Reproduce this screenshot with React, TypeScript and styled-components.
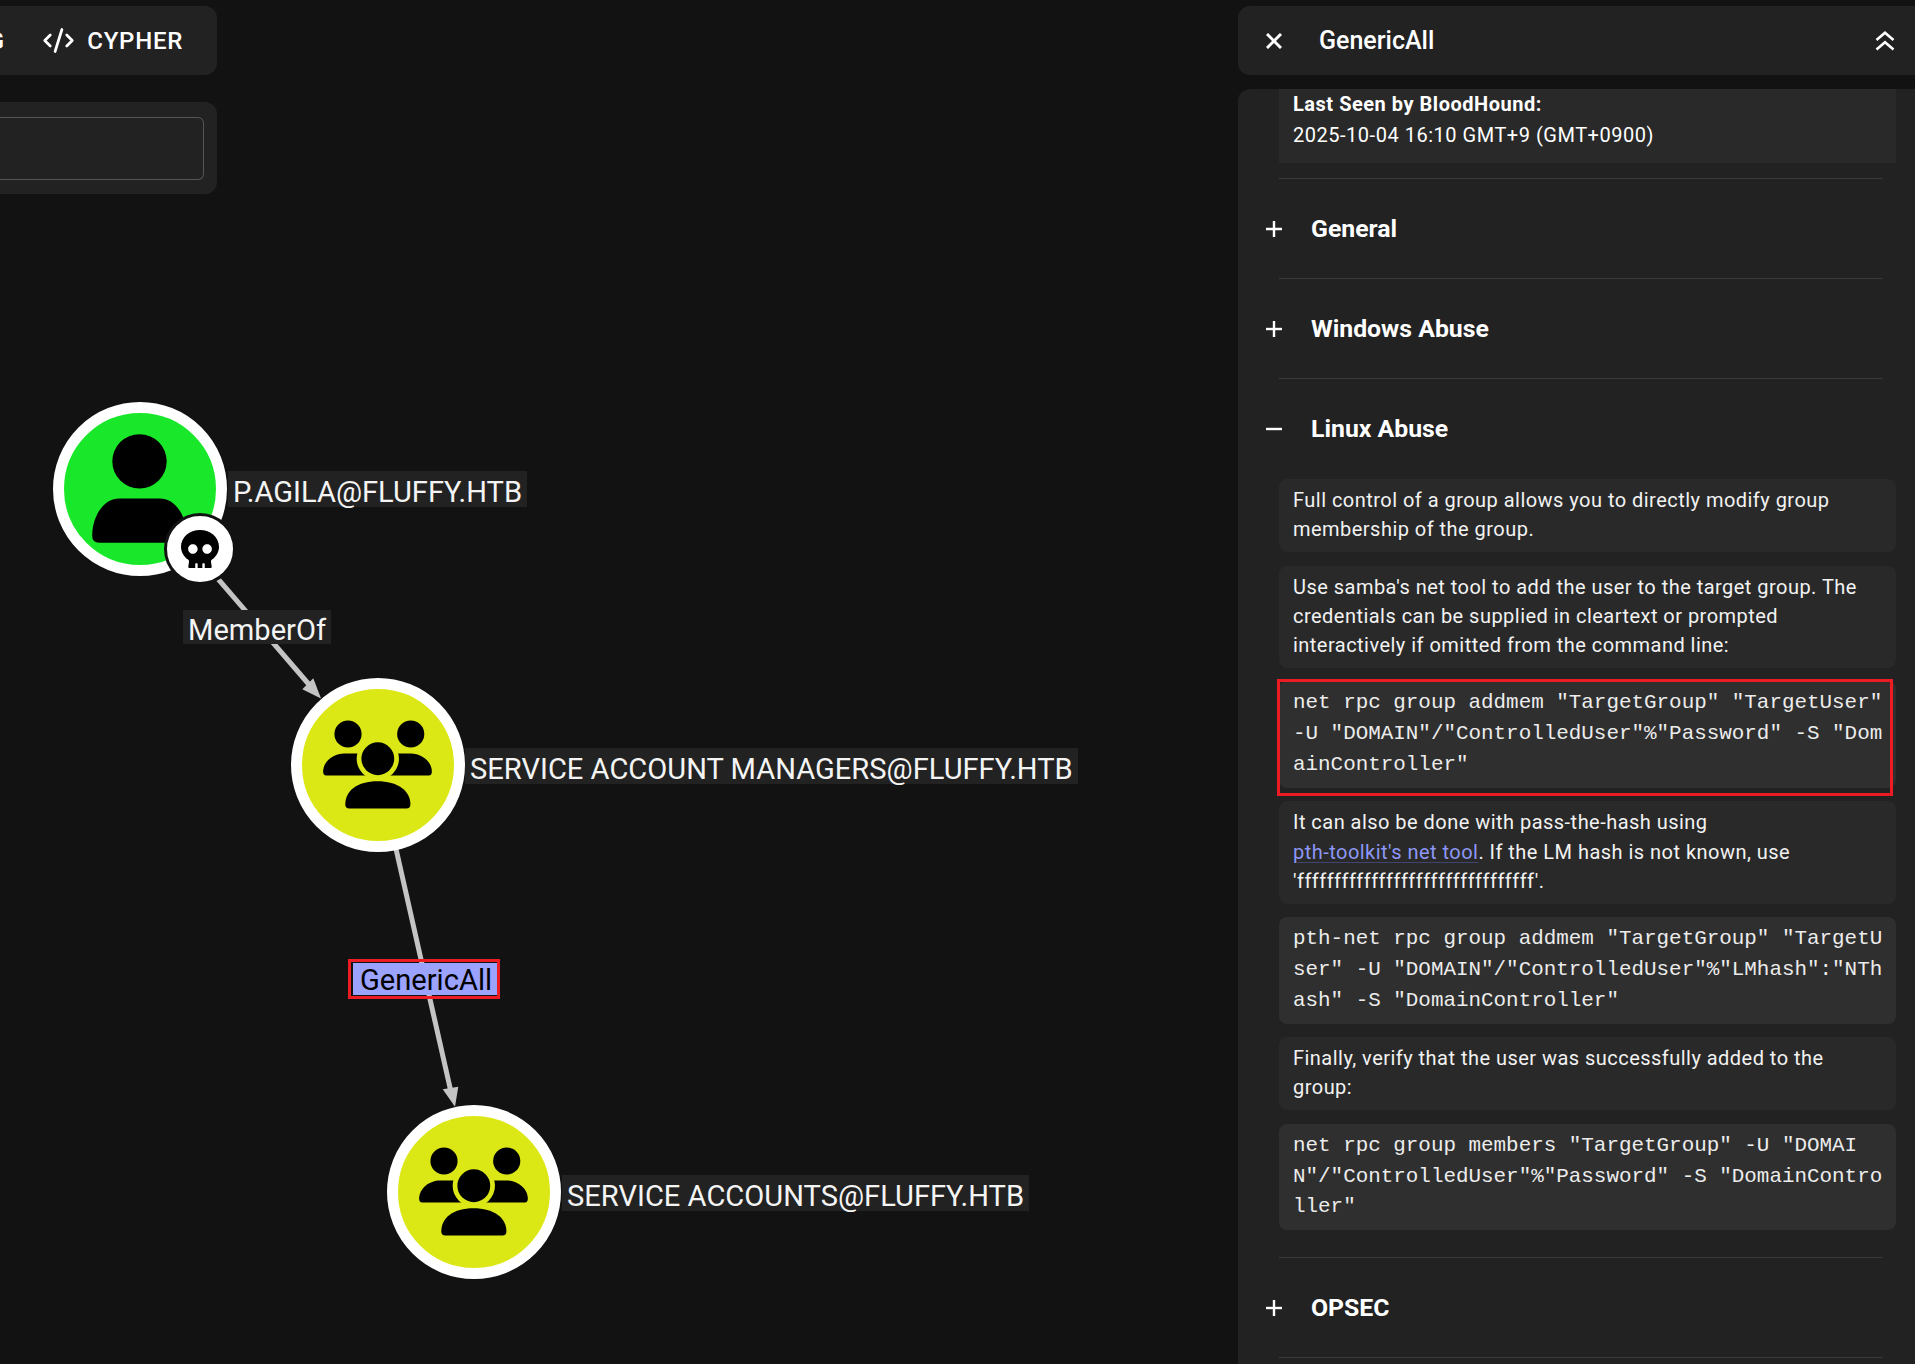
import React from "react";
import styled, { createGlobalStyle } from "styled-components";
import { CodeXml } from "lucide-react";
import { FaSkull } from "react-icons/fa";

const GlobalStyle = createGlobalStyle`
  html, body {
    margin: 0;
    padding: 0;
    background: #121212;
  }
  * {
    box-sizing: border-box;
  }
`;

const UserGlyph = () => (
  <NodeGlyph viewBox="-75 -75 150 150">
    <circle cx="0" cy="-27" r="27" fill="#000" />
    <path
      d="M-20 10H20C36 10 47 28 47 47Q47 54 40 54H-40Q-47 54 -47 47C-47 28 -36 10 -20 10Z"
      fill="#000"
    />
  </NodeGlyph>
);

const GroupGlyph = () => (
  <NodeGlyph viewBox="-75 -75 150 150">
    <circle cx="-29.3" cy="-30.3" r="13.5" fill="#000" />
    <circle cx="33" cy="-30.3" r="13.5" fill="#000" />
    <path d="M-51 11Q-54 11 -54 7C-54 -3 -44 -11 -33 -11H-5V11Z" fill="#000" />
    <path d="M54 11H5V-11H33C44 -11 54 -3 54 7Q54 11 51 11Z" fill="#000" />
    <circle cx="0.3" cy="-5.7" r="21" fill="#dce816" />
    <circle cx="0.3" cy="-5.7" r="16.3" fill="#000" />
    <path
      d="M-28 43.7Q-32 43.7 -32 39.7C-32 26 -20 16.7 0 16.7C20 16.7 32.7 26 32.7 39.7Q32.7 43.7 28.7 43.7Z"
      fill="#000"
    />
  </NodeGlyph>
);

const Chevrons = () => (
  <svg width="20" height="20" viewBox="0 0 20 20" fill="none" stroke="#fff" strokeWidth="2.6">
    <polyline points="1.5,9 10,1.8 18.5,9" />
    <polyline points="1.5,18.5 10,11.3 18.5,18.5" />
  </svg>
);

const CloseIcon = () => (
  <svg width="16" height="16" viewBox="0 0 16 16" stroke="#fff" strokeWidth="3">
    <line x1="1" y1="1" x2="15" y2="15" />
    <line x1="15" y1="1" x2="1" y2="15" />
  </svg>
);

const ToggleIcon: React.FC<{ open?: boolean }> = ({ open }) => (
  <svg width="16" height="16" viewBox="0 0 16 16" stroke="#fff" strokeWidth="2.4">
    <line x1="0" y1="8" x2="16" y2="8" />
    {!open && <line x1="8" y1="0" x2="8" y2="16" />}
  </svg>
);

const Section: React.FC<{ title: string; open?: boolean; children?: React.ReactNode }> = ({
  title,
  open,
  children,
}) => (
  <>
    <SectionRow>
      <ToggleSlot>
        <ToggleIcon open={open} />
      </ToggleSlot>
      <SectionTitle>{title}</SectionTitle>
    </SectionRow>
    {children}
    <Divider />
  </>
);

export default function App() {
  return (
    <Page>
      <GlobalStyle />

      <GraphCanvas>
        <EdgeLayer width="1915" height="1364">
          <line x1="200" y1="558" x2="312" y2="688" stroke="#c4c4c4" strokeWidth="5" />
          <polygon points="321,698.5 302.3,689.3 313.3,678.3" fill="#c4c4c4" />
          <line x1="394" y1="840" x2="451" y2="1092" stroke="#c4c4c4" strokeWidth="5" />
          <polygon points="455,1106.7 442.7,1089.3 458.3,1086.7" fill="#c4c4c4" />
        </EdgeLayer>

        <Node $x={140} $y={488.7} $fill="#19e82a">
          <UserGlyph />
          <Badge>
            <FaSkull size={38} color="#000" />
          </Badge>
        </Node>
        <NodeLabel $x={228} $y={471}>P.AGILA@FLUFFY.HTB</NodeLabel>

        <EdgeLabel $x={183} $y={610}>MemberOf</EdgeLabel>

        <Node $x={377.8} $y={765} $fill="#dce816">
          <GroupGlyph />
        </Node>
        <NodeLabel $x={465} $y={748}>SERVICE ACCOUNT MANAGERS@FLUFFY.HTB</NodeLabel>

        <SelectedEdgeLabel $x={353} $y={963}>
          GenericAll
          <RedBox $inset="-4.5px -3px -4px -5px" />
        </SelectedEdgeLabel>

        <Node $x={474} $y={1191.7} $fill="#dce816">
          <GroupGlyph />
        </Node>
        <NodeLabel $x={562} $y={1175}>SERVICE ACCOUNTS@FLUFFY.HTB</NodeLabel>
      </GraphCanvas>

      <LeftColumn>
        <Toolbar>
          <TabLabel>PATHFINDING</TabLabel>
          <CypherTab>
            <CodeXml size={33} strokeWidth={2} />
            <TabLabel>CYPHER</TabLabel>
          </CypherTab>
        </Toolbar>
        <SearchPanel>
          <SearchBox />
        </SearchPanel>
      </LeftColumn>

      <RightColumn>
        <DetailHeader>
          <CloseSlot>
            <CloseIcon />
          </CloseSlot>
          <DetailTitle>GenericAll</DetailTitle>
          <ChevronSlot>
            <Chevrons />
          </ChevronSlot>
        </DetailHeader>

        <DetailPanel>
          <LastSeen>
            <LastSeenLabel>Last Seen by BloodHound:</LastSeenLabel>
            <LastSeenValue>2025-10-04 16:10 GMT+9 (GMT+0900)</LastSeenValue>
          </LastSeen>
          <Divider />

          <Section title="General" />
          <Section title="Windows Abuse" />
          <Section title="Linux Abuse" open>
            <AbuseBody>
              <Paragraph>
                Full control of a group allows you to directly modify group membership of the group.
              </Paragraph>
              <Paragraph>
                Use samba's net tool to add the user to the target group. The credentials can be
                supplied in cleartext or prompted interactively if omitted from the command line:
              </Paragraph>
              <CodeBlock>
                net rpc group addmem "TargetGroup" "TargetUser" -U "DOMAIN"/"ControlledUser"%"Password" -S "DomainController"
                <RedBox $inset="-2px 3px -8px -2px" />
              </CodeBlock>
              <Paragraph>
                It can also be done with pass-the-hash using{" "}
                <DocLink>pth-toolkit's net tool</DocLink>. If the LM hash is not known, use
                'ffffffffffffffffffffffffffffffff'.
              </Paragraph>
              <CodeBlock>
                pth-net rpc group addmem "TargetGroup" "TargetUser" -U "DOMAIN"/"ControlledUser"%"LMhash":"NThash" -S "DomainController"
              </CodeBlock>
              <Paragraph>Finally, verify that the user was successfully added to the group:</Paragraph>
              <CodeBlock>
                net rpc group members "TargetGroup" -U "DOMAIN"/"ControlledUser"%"Password" -S "DomainController"
              </CodeBlock>
            </AbuseBody>
          </Section>
          <Section title="OPSEC" />
        </DetailPanel>
      </RightColumn>
    </Page>
  );
}

const Page = styled.div`
  position: relative;
  width: 1915px;
  height: 1364px;
  padding-top: 6px;
  overflow: hidden;
  display: flex;
  justify-content: space-between;
  background: #121212;
  font-family: Roboto, "Liberation Sans", sans-serif;
  color: #fff;
`;

const GraphCanvas = styled.div`
  position: absolute;
  inset: 0;
`;

const EdgeLayer = styled.svg`
  position: absolute;
  left: 0;
  top: 0;
`;

const Node = styled.div<{ $x: number; $y: number; $fill: string }>`
  position: absolute;
  left: ${(p) => p.$x - 87}px;
  top: ${(p) => p.$y - 87}px;
  width: 174px;
  height: 174px;
  border-radius: 50%;
  border: 11.5px solid #fff;
  background: ${(p) => p.$fill};
`;

const NodeGlyph = styled.svg`
  display: block;
  width: 151px;
  height: 151px;
`;

const Badge = styled.div`
  position: absolute;
  left: 100px;
  top: 100px;
  width: 72px;
  height: 72px;
  border-radius: 50%;
  background: #fff;
  border: 3.5px solid #121212;
  display: flex;
  align-items: center;
  justify-content: center;
`;

const NodeLabel = styled.div<{ $x: number; $y: number }>`
  position: absolute;
  left: ${(p) => p.$x}px;
  top: ${(p) => p.$y}px;
  height: 36px;
  padding: 0 5px;
  background: #222;
  color: #f4f4f4;
  font-size: 29.1px;
  line-height: 43px;
  white-space: nowrap;
`;

const EdgeLabel = styled(NodeLabel)`
  height: 34px;
  line-height: 40px;
`;

const SelectedEdgeLabel = styled(NodeLabel)`
  height: 32px;
  line-height: 34px;
  padding: 0 5px 0 7px;
  background: #9ba3ff;
  color: #000;
`;

const RedBox = styled.div<{ $inset: string }>`
  position: absolute;
  inset: ${(p) => p.$inset};
  border: 3px solid #ed1c24;
  pointer-events: none;
`;

const LeftColumn = styled.div`
  position: relative;
  width: 217px;
  display: flex;
  flex-direction: column;
  gap: 27px;
`;

const Toolbar = styled.div`
  height: 69px;
  padding-right: 34px;
  display: flex;
  align-items: center;
  justify-content: flex-end;
  gap: 37px;
  overflow: hidden;
  background: #222;
  border-radius: 0 12px 12px 0;
`;

const CypherTab = styled.div`
  display: flex;
  align-items: center;
  gap: 12.5px;
`;

const TabLabel = styled.span`
  font-size: 24px;
  font-weight: 500;
  letter-spacing: 0.03em;
  white-space: nowrap;
`;

const SearchPanel = styled.div`
  height: 92px;
  padding: 15px 13px 14px 0;
  background: #222;
  border-radius: 0 12px 12px 0;
`;

const SearchBox = styled.div`
  height: 100%;
  border: 1px solid #555;
  border-left: none;
  border-radius: 0 6px 6px 0;
`;

const RightColumn = styled.div`
  position: relative;
  width: 677px;
  display: flex;
  flex-direction: column;
  gap: 14px;
`;

const DetailHeader = styled.div`
  height: 69px;
  display: flex;
  align-items: center;
  background: #222;
  border-radius: 12px 0 0 12px;
`;

const CloseSlot = styled.div`
  width: 81px;
  padding-left: 28px;
  display: flex;
`;

const DetailTitle = styled.div`
  font-size: 25px;
  font-weight: 500;
`;

const ChevronSlot = styled.div`
  margin-left: auto;
  padding-right: 20px;
  display: flex;
`;

const DetailPanel = styled.div`
  flex: 1;
  padding-left: 41px;
  overflow: hidden;
  background: #222;
  border-radius: 12px 0 0 0;
`;

const LastSeen = styled.div`
  width: 617px;
  height: 74px;
  padding: 0 14px;
  margin-bottom: 15px;
  background: #292929;
  font-size: 20px;
  letter-spacing: 0.52px;
`;

const LastSeenLabel = styled.div`
  font-weight: 700;
  line-height: 31px;
`;

const LastSeenValue = styled.div`
  line-height: 30px;
`;

const Divider = styled.div`
  width: 603px;
  height: 1px;
  background: #3c3c3c;
`;

const SectionRow = styled.div`
  height: 99px;
  margin-left: -41px;
  display: flex;
  align-items: center;
`;

const ToggleSlot = styled.div`
  width: 73px;
  padding-left: 28px;
  display: flex;
`;

const SectionTitle = styled.div`
  font-size: 24.8px;
  font-weight: 700;
  line-height: 30px;
  padding-top: 1px;
`;

const AbuseBody = styled.div`
  width: 617px;
  padding: 1px 0 27px;
  display: flex;
  flex-direction: column;
  gap: 13.5px;
`;

const Paragraph = styled.div`
  padding: 7px 14px 7.5px;
  background: #292929;
  border-radius: 8px;
  font-size: 20px;
  line-height: 29.3px;
  letter-spacing: 0.47px;
  color: #f2f2f2;
`;

const CodeBlock = styled.div`
  position: relative;
  padding: 7px 12px 7px 14px;
  background: #2f2f2f;
  border-radius: 8px;
  font-family: "Liberation Mono", monospace;
  font-size: 20.9px;
  line-height: 30.8px;
  word-break: break-all;
  color: #ececec;
`;

const DocLink = styled.span`
  color: #8d97f5;
  white-space: nowrap;
  text-decoration: underline;
  text-decoration-color: #3f4470;
  text-decoration-thickness: 1px;
  text-underline-offset: 3px;
`;
